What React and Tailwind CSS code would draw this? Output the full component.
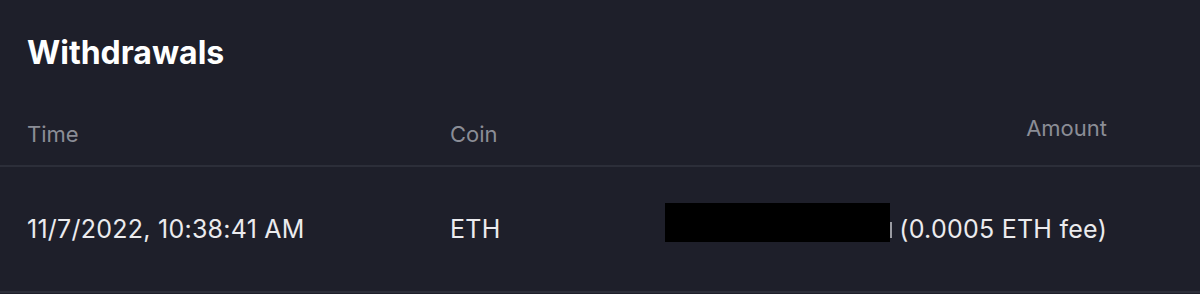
export default function App() {
  return (
    <div
      className="w-[1200px] h-[294px] bg-[#1e1f2a] overflow-hidden"
      style={{ fontFamily: 'Inter, "Noto Sans", sans-serif' }}
    >
      <div className="pt-[35px] pl-[27px]">
        <h1 className="text-[32px] leading-[36px] font-bold text-white">
          Withdrawals
        </h1>
      </div>

      <div className="mt-[43px] flex items-end border-b-2 border-[#2c2e39] pb-[17px] text-[22px] leading-[28px] text-[#8b8d96]">
        <div className="w-[450px] pl-[27px]">Time</div>
        <div className="flex-1">Coin</div>
        <div className="pr-[93px] pb-[6px] text-right">Amount</div>
      </div>

      <div className="flex items-start border-b-2 border-[#2c2e39] pt-[46px] pb-[46px] text-[25px] leading-[32px] tracking-[0.25px] text-[#ebebee]">
        <div className="w-[450px] pl-[27px]">11/7/2022, 10:38:41 AM</div>
        <div className="flex-1">ETH</div>
        <div className="flex items-start pr-[93px]">
          <span className="mt-[-10px] h-[39px] w-[225px] bg-black" />
          <span className="mt-[9px] h-[16px] w-[2px] bg-[#9a9ba2]" />
          <span className="ml-[7px]">(0.0005 ETH fee)</span>
        </div>
      </div>
    </div>
  );
}
